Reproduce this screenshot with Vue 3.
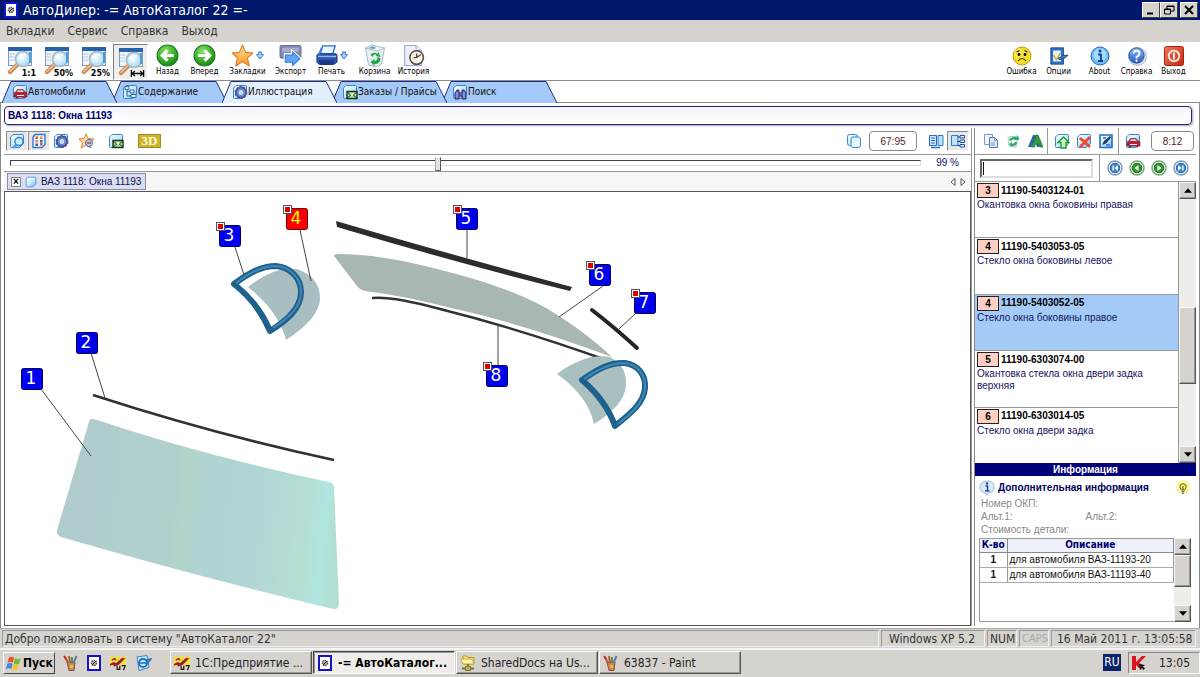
<script setup>
import { ref } from 'vue'

const menu = ['Вкладки', 'Сервис', 'Справка', 'Выход']

const zoomTools = [
  { label: '1:1', title: 'Масштаб 1:1' },
  { label: '50%', title: 'Масштаб 50%' },
  { label: '25%', title: 'Масштаб 25%' },
]
const mainTools = [
  { icon: 'back', label: 'Назад', size: 'w37' },
  { icon: 'forward', label: 'Вперед', size: 'w37' },
  { icon: 'star', label: 'Закладки', size: 'w49', drop: true },
  { icon: 'export', label: 'Экспорт', size: 'w37' },
  { icon: 'printer', label: 'Печать', size: 'w45', drop: true },
  { icon: 'bin', label: 'Корзина', size: 'w41' },
  { icon: 'history', label: 'История', size: 'w37' },
]
const sideTools = [
  { icon: 'sad', label: 'Ошибка' },
  { icon: 'options', label: 'Опции' },
  { icon: 'about', label: 'About' },
  { icon: 'help', label: 'Справка' },
  { icon: 'exit', label: 'Выход' },
]

const tabs = [
  { icon: 's-car', label: 'Автомобили' },
  { icon: 's-tree', label: 'Содержание' },
  { icon: 's-gear', label: 'Иллюстрация' },
  { icon: 's-mail', label: 'Заказы / Прайсы' },
  { icon: 's-find', label: 'Поиск' },
]
const activeTab = ref(2)

const viewPosition = ref(470)
const query = ref('')
const counter = ref('67:95')
const partCounter = ref('8:12')

const parts = [
  { n: 3, code: '11190-5403124-01', name: 'Окантовка окна боковины правая' },
  { n: 4, code: '11190-5403053-05', name: 'Стекло окна боковины левое' },
  { n: 4, code: '11190-5403052-05', name: 'Стекло окна боковины правое' },
  { n: 5, code: '11190-6303074-00', name: 'Окантовка стекла окна двери задка верхняя' },
  { n: 6, code: '11190-6303014-05', name: 'Стекло окна двери задка' },
]
const selected = ref(2)

const uses = [
  { qty: 1, text: 'для автомобиля ВАЗ-11193-20' },
  { qty: 1, text: 'для автомобиля ВАЗ-11193-40' },
]

const callouts = [
  { n: 1, x: 21, y: 368, line: [41, 389, 91, 456] },
  { n: 2, x: 76, y: 332, line: [91, 353, 105, 398] },
  { n: 3, x: 219, y: 225, line: [235, 247, 244, 275], flag: true },
  { n: 4, x: 286, y: 208, line: [300, 230, 311, 281], flag: true, hot: true },
  { n: 5, x: 456, y: 208, line: [467, 230, 467, 258], flag: true },
  { n: 6, x: 589, y: 264, line: [603, 286, 559, 317], flag: true },
  { n: 7, x: 634, y: 292, line: [635, 314, 618, 330], flag: true },
  { n: 8, x: 486, y: 365, line: [498, 326, 498, 365], flag: true },
]

const tasks = [
  { icon: 'onec', label: '1C:Предприятие ...' },
  { icon: 'catalog', label: '-= АвтоКаталог...', active: true },
  { icon: 'netfolder', label: 'SharedDocs на Us...' },
  { icon: 'paint', label: '63837 - Paint' },
]
</script>

<template>
  <div class="desktop">
    <svg class="defs" aria-hidden="true">
      <defs>
        <linearGradient id="gPage" x1="0" y1="0" x2="1" y2="1">
          <stop offset="0" stop-color="#ffffff" /><stop offset="0.5" stop-color="#c9ecfb" /><stop offset="1" stop-color="#6fb4ef" />
        </linearGradient>
        <radialGradient id="gGreen" cx="0.4" cy="0.3" r="0.8">
          <stop offset="0" stop-color="#8be36a" /><stop offset="0.6" stop-color="#35a828" /><stop offset="1" stop-color="#147a14" />
        </radialGradient>
        <linearGradient id="gBlue" x1="0" y1="0" x2="0" y2="1">
          <stop offset="0" stop-color="#8cc0f5" /><stop offset="1" stop-color="#2059c4" />
        </linearGradient>
        <linearGradient id="gRed" x1="0" y1="0" x2="1" y2="1">
          <stop offset="0" stop-color="#f0795a" /><stop offset="1" stop-color="#c02a12" />
        </linearGradient>
        <linearGradient id="gStar" x1="0" y1="0" x2="0" y2="1">
          <stop offset="0" stop-color="#ffe08a" /><stop offset="1" stop-color="#f79a2c" />
        </linearGradient>
        <radialGradient id="gLens" cx="0.4" cy="0.4" r="0.7">
          <stop offset="0" stop-color="#ffffff" /><stop offset="1" stop-color="#9ad4f2" />
        </radialGradient>
        <linearGradient id="gWind" x1="57" y1="440" x2="340" y2="470" gradientUnits="userSpaceOnUse">
          <stop offset="0" stop-color="#b3cdcd" /><stop offset="0.14" stop-color="#b0cbce" /><stop offset="0.25" stop-color="#afd0cc" />
          <stop offset="0.42" stop-color="#afd0cc" /><stop offset="0.47" stop-color="#b1d5c9" /><stop offset="0.54" stop-color="#b0d3d3" />
          <stop offset="0.7" stop-color="#b0d5d5" /><stop offset="0.82" stop-color="#b4dad4" /><stop offset="0.9" stop-color="#b4dfd3" />
          <stop offset="0.97" stop-color="#b0e6e0" /><stop offset="1" stop-color="#b2dfd3" />
        </linearGradient>
      </defs>

      <symbol id="zoomwin" viewBox="0 0 28 30">
        <rect x="2.5" y="2.5" width="23" height="18" fill="#eef5fc" stroke="#7d9cc4" />
        <rect x="2" y="2" width="24" height="4" fill="#2763ad" />
        <path d="M3 9h6M3 12h5M3 15h5" stroke="#bccbdd" />
        <path d="M12 19 4 27" stroke="#c98a55" stroke-width="4.4" stroke-linecap="round" />
        <path d="M11.500 19 4 26.500" stroke="#f0c39a" stroke-width="1.500" stroke-linecap="round" />
        <circle cx="17" cy="14" r="7.500" fill="url(#gLens)" stroke="#a8b9c8" stroke-width="1.700" />
        <path d="M13 13a5 5 0 0 1 7-3" fill="none" stroke="#fff" stroke-width="1.500" />
        <path d="M24 7v11" stroke="#4d9ad6" stroke-width="2" />
      </symbol>
      <symbol id="back" viewBox="0 0 22 22">
        <circle cx="11" cy="11" r="10" fill="url(#gGreen)" stroke="#1b7c1b" />
        <path d="M17 11H6m5-5-5 5 5 5" fill="none" stroke="#fff" stroke-width="3" />
      </symbol>
      <symbol id="forward" viewBox="0 0 22 22">
        <circle cx="11" cy="11" r="10" fill="url(#gGreen)" stroke="#1b7c1b" />
        <path d="M5 11h11m-5-5 5 5-5 5" fill="none" stroke="#fff" stroke-width="3" />
      </symbol>
      <symbol id="star" viewBox="0 0 22 22">
        <path d="m11 1 3 7 7 .6-5.300 4.700L17.500 21 11 16.700 4.500 21l1.700-7.700L1 8.600 8 8z" fill="url(#gStar)" stroke="#e07a22" stroke-linejoin="round" />
      </symbol>
      <symbol id="down" viewBox="0 0 9 10">
        <path d="M3 1h3v3h2.500l-4 5-4-5H3z" fill="#a9d2fa" stroke="#2b6fc4" />
      </symbol>
      <symbol id="export" viewBox="0 0 22 22">
        <rect x="1" y="1.500" width="20" height="12" rx="1.500" fill="#8289b4" stroke="#666e9e" />
        <path d="M3 3.500h16v4H3z" fill="#a5accf" />
        <path d="M5 19V9h7V5.500l9.500 8.500-9.500 8V19z" fill="#fff" stroke="#fff" />
        <path d="M6 17.500v-7h7V7.500l7 6.500-7 6.500v-3z" fill="#5ea5f4" stroke="#357bd8" />
      </symbol>
      <symbol id="printer" viewBox="0 0 24 24">
        <path d="M5 12 8 2h13l-3 10z" fill="#eaf6ff" stroke="#2a6bd0" stroke-width="1.400" />
        <path d="M2 12q0-2 3-2h15q3 0 3 2v7l-3 2H4l-2-2z" fill="#2c54ac" stroke="#173884" />
        <path d="M3 13h19" stroke="#92b7f1" stroke-width="1.500" />
        <path d="M4 17h16l-1 5H5z" fill="#1b3786" /><path d="M3 11 6 4h2l-3 7z" fill="#3c7ce0" />
      </symbol>
      <symbol id="bin" viewBox="0 0 22 23">
        <path d="m2 4 3 17 9 2 4-3 3-16-7 2z" fill="#e4f0f4" stroke="#a4bccb" />
        <path d="m2 4 6-3 13 3-7 3z" fill="#f5fafc" stroke="#a4bccb" />
        <path d="m5 4 4-2 4 2-3 1z" fill="#69a3c8" />
        <path d="M7 11q3-4 7-1l1-2 2 5-5-1 1-1q-3-2-4 2zM17 14q0 6-6 6v2l-4-4 4-3v2q3 0 3-4z" fill="#27a343" />
      </symbol>
      <symbol id="history" viewBox="0 0 22 22">
        <path d="M2.500 1.500h11l5 4.500v14.500h-16z" fill="#eef1fa" stroke="#9aa7cf" />
        <path d="M13.500 1.500V6h5" fill="#fff" stroke="#9aa7cf" />
        <circle cx="14" cy="13" r="6.500" fill="#f8f4ea" stroke="#59534e" stroke-width="1.500" />
        <path d="M14 13V9m0 4h-3m3 0 4-3" stroke="#584436" stroke-width="1.200" />
      </symbol>
      <symbol id="sad" viewBox="0 0 20 20">
        <circle cx="10" cy="10" r="9" fill="#f5df26" stroke="#b79a14" />
        <circle cx="7" cy="7" r="4.500" fill="#fff06a" opacity=".6" />
        <path d="m4.500 6 3-1.500M15.500 6l-3-1.500M6 15q4-5 8 0" fill="none" stroke="#332a08" stroke-width="1.200" />
        <circle cx="7" cy="8.500" r="1.400" /><circle cx="13" cy="8.500" r="1.400" />
      </symbol>
      <symbol id="options" viewBox="0 0 22 22">
        <path d="M2 2h14v18H2z" fill="#2c6fc6" stroke="#18498f" />
        <path d="M4.500 5H13v12H4.500z" fill="#e8f6ff" /><path d="m5 10 3 5 5-8" fill="none" stroke="#d3b33c" stroke-width="1.800" />
        <path d="m10 13.500 6-3 5-.5-3 3-7 2z" fill="#4c7fc4" stroke="#1e477f" />
      </symbol>
      <symbol id="about" viewBox="0 0 20 20">
        <circle cx="10" cy="10" r="9" fill="#6db9f0" stroke="#2371c9" /><circle cx="10" cy="9" r="6.500" fill="#a4dafa" />
        <circle cx="10" cy="5" r="1.500" fill="#0f3f9a" /><path d="M8 8.500h3V15M8 15h5" fill="none" stroke="#0f3f9a" stroke-width="1.800" />
      </symbol>
      <symbol id="help" viewBox="0 0 21 21">
        <circle cx="11" cy="11" r="9.500" fill="#d5e0ee" stroke="#a9bad0" /><circle cx="10" cy="10" r="8" fill="url(#gBlue)" stroke="#274f9e" />
        <path d="M7 8q0-3 3-3t3 2.500-3 4v1.500" fill="none" stroke="#fff" stroke-width="2" /><circle cx="10" cy="15.500" r="1.200" fill="#fff" />
      </symbol>
      <symbol id="exit" viewBox="0 0 20 20">
        <rect x=".5" y=".5" width="19" height="19" rx="2" fill="url(#gRed)" stroke="#a52210" />
        <circle cx="10" cy="10" r="5.300" fill="none" stroke="#ffe9e2" stroke-width="1.800" /><path d="M10 6.500v7" stroke="#ffe9e2" stroke-width="2" />
      </symbol>

      <symbol id="page" viewBox="0 0 16 16">
        <path d="M4 1.500h9.500q1 0 1 1v8l-4 4h-8q-1 0-1-1V4z" fill="url(#gPage)" stroke="#3b86d2" />
      </symbol>
      <symbol id="s-car" viewBox="0 0 16 16">
        <use href="#page" /><path d="M2 10q0-2 2-2l1.500-2.500h5.500L13 8q2 0 2 2v3h-2v1h-2v-1H6v1H4v-1H2z" fill="#b32436" stroke="#6d1424" stroke-width=".6" />
        <path d="m5 8 1-1.700h4.500L12 8z" fill="#efd7de" /><path d="M5 11.500h7" stroke="#f7e8ea" />
      </symbol>
      <symbol id="s-tree" viewBox="0 0 16 16">
        <use href="#page" /><path d="M5 4v8h4M5 7.500h3" fill="none" stroke="#2b64ad" /><path d="M3 2.500h4v3H3zM8 6h4v3H8zM9 10.500h5v3H9z" fill="#d7ecff" stroke="#2b64ad" stroke-width=".9" />
      </symbol>
      <symbol id="s-gear" viewBox="0 0 16 16">
        <use href="#page" /><circle cx="9" cy="8.500" r="4.300" fill="none" stroke="#4a5aa0" stroke-width="3.400" /><circle cx="9" cy="8.500" r="5.800" fill="none" stroke="#4a5aa0" stroke-dasharray="2.200 1.400" stroke-width="1.400" /><circle cx="9" cy="8.500" r="3.600" fill="none" stroke="#8c9ad0" />
      </symbol>
      <symbol id="s-mail" viewBox="0 0 16 16">
        <use href="#page" /><path d="M5 7.500h10v7H5z" fill="#b8e0a4" stroke="#0e3a1a" stroke-width="1.400" /><path d="m5 8 5 4 5-4M5 14l4-3m6 3-4-3" fill="none" stroke="#0e3a1a" /><circle cx="10" cy="10.500" r="1.500" fill="#e9f7c4" />
      </symbol>
      <symbol id="s-find" viewBox="0 0 16 16">
        <use href="#page" /><path d="M3 15V9l2-3h2v3h3V6h2l2 3v6h-4v-3H7v3z" fill="#5961ae" stroke="#2e357d" /><path d="M5 8v6m7-6v6" stroke="#b7bdf0" />
      </symbol>
      <symbol id="s-zoom" viewBox="0 0 16 16">
        <use href="#page" /><path d="m8 11-4 4" stroke="#5a9bd8" stroke-width="2.400" /><circle cx="10" cy="8.500" r="4" fill="#c9f0ff" stroke="#3487cc" stroke-width="1.400" />
      </symbol>
      <symbol id="s-grid" viewBox="0 0 16 16">
        <path d="M4 1.500h10v10l-3 3H2V4z" fill="#e7f3ff" stroke="#2f7bd0" stroke-width="1.400" />
        <path d="M4.500 3.500h2.500v2.500H4.500zM9 10h2.500v2.500H9z" fill="#e34a2c" /><path d="M4.500 7h2.500v2.500H4.500zM9 3.500h2.500v2.500H9z" fill="#e8903a" /><path d="M4.500 10.500h2.500v2.500H4.500zM9 7h2.500v2.500H9z" fill="#3a62b8" />
      </symbol>
      <symbol id="s-star" viewBox="0 0 16 16">
        <path d="m7 1 2 4.500 6 .5-4.500 4 1.500 5-5-3-5 3 1.500-5L0 6l5-.5z" fill="#fbd9a4" stroke="#e88132" /><circle cx="10" cy="10" r="3.500" fill="#b5cfee" stroke="#4a6dae" /><path d="M8 10h4" stroke="#c63d3d" stroke-width="1.500" />
      </symbol>
      <symbol id="s-copy" viewBox="0 0 16 16">
        <path d="M1.500 1.500h8v10h-8z" fill="#f1f8ff" stroke="#7798cb" /><path d="M6.500 4.500h5l3 3v7h-8z" fill="#dceaff" stroke="#5779b8" /><path d="M11.500 4.500v3h3M8 10h4M8 12h4" fill="none" stroke="#7798cb" />
      </symbol>
      <symbol id="s-pages" viewBox="0 0 16 16">
        <rect x="1.500" y="1.500" width="10" height="11" rx="2" fill="url(#gPage)" stroke="#3b86d2" /><rect x="5" y="4" width="9.500" height="10.500" rx="2" fill="#e5f7ff" stroke="#3b86d2" />
      </symbol>
      <symbol id="s-listleft" viewBox="0 0 16 16">
        <path d="M1.500 2.500h7v10h-7z" fill="#cbe6ff" stroke="#2c6bc0" /><path d="M3 5h4M3 7.500h4M3 10h4" stroke="#2c6bc0" /><path d="M10 2.500h5v10h-5z" fill="#bfe3ff" stroke="#2c7ad0" /><path d="M3 14.500h9" stroke="#2c6bc0" stroke-width="1.500" />
      </symbol>
      <symbol id="s-listright" viewBox="0 0 16 16">
        <path d="M1.500 2.500H8v10H1.500z" fill="#bfe3ff" stroke="#2c7ad0" /><path d="M10 2.500h4.500v2.500h-4.500zm0 4.500h4.500v2.500h-4.500zm0 4.500h4.500v2.500h-4.500z" fill="#dcefff" stroke="#23509a" /><path d="M7 4h3M7 8.500h3M7 12.500h3" stroke="#23509a" />
      </symbol>
      <symbol id="s-recycle" viewBox="0 0 16 16">
        <path d="m3 4 10-1-2 11-7-1z" fill="#eaf5ee" stroke="#b1cdbd" /><path d="M4 7q3-4 8-3l1-2 1 5-5 0 1-1q-3 0-4 2zM12 9q0 4-5 4l0 1.500L4 11l3-2v2q2 0 3-2z" fill="#27a86c" />
      </symbol>
      <symbol id="s-fonts" viewBox="0 0 16 16">
        <path d="M1 14 6 2h2.500L13 14h-3l-1-3H5l-1 3z" fill="#2d62b3" /><path d="M4 14 9 2h2l5 12h-3l-1-3H8.500l-1 3z" fill="#2c9a44" stroke="#17642c" stroke-width=".6" />
      </symbol>
      <symbol id="s-up" viewBox="0 0 16 16">
        <use href="#page" /><path d="m9.500 4 5.500 5.500h-3V15H7V9.500H4z" fill="#d0f2c4" stroke="#219a34" stroke-width="1.400" />
      </symbol>
      <symbol id="s-del" viewBox="0 0 16 16">
        <use href="#page" /><path d="m4 5 10 9M14 4 4 14" stroke="#ee4a30" stroke-width="3" />
      </symbol>
      <symbol id="s-edit" viewBox="0 0 16 16">
        <path d="M2 2h12v12.500H2z" fill="url(#gPage)" stroke="#1e6dc8" stroke-width="1.600" /><path d="m4 12 2-4 6-5 1 1.500-5 6z" fill="#22375e" /><path d="M5 5h3M8 12h4" stroke="#2a70c4" stroke-width="1.300" />
      </symbol>
      <symbol id="ring-blue" viewBox="0 0 16 16">
        <circle cx="8" cy="8" r="7" fill="#fff" stroke="#7f9dbc" stroke-width="1.500" /><circle cx="8" cy="8" r="4.800" fill="#3a86d3" stroke="#1d5daa" />
      </symbol>
      <symbol id="ring-green" viewBox="0 0 16 16">
        <circle cx="8" cy="8" r="7" fill="#fff" stroke="#7ca57c" stroke-width="1.500" /><circle cx="8" cy="8" r="4.800" fill="#2c9a2c" stroke="#17681a" />
      </symbol>
      <symbol id="nav-first" viewBox="0 0 16 16"><use href="#ring-blue" /><path d="M11 5v6L7.500 8zM5.500 5.500h1.500v5H5.500z" fill="#fff" /></symbol>
      <symbol id="nav-prev" viewBox="0 0 16 16"><use href="#ring-green" /><path d="M9.500 5v6L5.500 8z" fill="#fff" /></symbol>
      <symbol id="nav-next" viewBox="0 0 16 16"><use href="#ring-green" /><path d="M6.500 5v6l4-3z" fill="#fff" /></symbol>
      <symbol id="nav-last" viewBox="0 0 16 16"><use href="#ring-blue" /><path d="M5 5v6l3.500-3zM9 5.500h1.500v5H9z" fill="#fff" /></symbol>

      <symbol id="catalog" viewBox="0 0 16 16">
        <rect x="1" width="14" height="16" fill="#1414c8" /><rect x="3" y="2" width="10" height="12" fill="#fff" /><circle cx="8" cy="8" r="2.600" fill="#aaa" stroke="#555" stroke-dasharray="1.500 .8" stroke-width="1.400" /><path d="m6 10 4-4" stroke="#222" />
      </symbol>
      <symbol id="flag" viewBox="0 0 18 16">
        <path d="M4 2.500q3-2 5.500 0L8.300 8Q5.500 6 2.700 8z" fill="#e8562a" /><path d="M10.500 3q3 1.700 6 0L15 8.700q-3 1.600-5.800 0z" fill="#6dba3c" /><path d="M2.300 9Q5 7 8 9l-1.300 5.500Q4 12.500 1 14.500z" fill="#4a84e0" /><path d="M8.900 9.700q3 1.600 5.800 0l-1.400 5.600q-3 1.500-5.800 0z" fill="#f3c52f" />
      </symbol>
      <symbol id="paint" viewBox="0 0 16 16">
        <path d="M4 7h8l-1 8.500H6z" fill="#c9825c" stroke="#84513a" /><path d="M5 8 2 2M7 8 6 1" stroke="#b35b38" stroke-width="2" /><path d="M9 8V2" stroke="#3c9a3c" stroke-width="1.800" /><path d="m10.500 8 3-7" stroke="#6e73ae" stroke-width="2" /><path d="M1 1l2 3" stroke="#d02c2c" stroke-width="2" /><path d="M7 10h3v3H7z" fill="#e4c33a" />
      </symbol>
      <symbol id="onec" viewBox="0 0 20 16">
        <path d="M1 1h18v10H1z" fill="#f3e33c" /><path d="m1 9 4-2 3 1 7-6 3 1-7 7-5 2-2-2-3 1z" fill="#9c1d32" /><path d="m3 5 3-2 2 2" fill="none" stroke="#9c1d32" stroke-width="1.500" /><path d="M9 11v4h3v-4M14 11h4l-2 5" fill="none" stroke="#111" stroke-width="1.300" />
      </symbol>
      <symbol id="outlook" viewBox="0 0 18 16">
        <path d="m3 2 10-1.500 2 12-10 3z" fill="#bfe6fb" stroke="#3d87c5" /><circle cx="9" cy="8" r="4" fill="none" stroke="#1e70be" stroke-width="1.800" /><path d="M6 8h6M12 5l5-1-4 5" fill="none" stroke="#1e70be" stroke-width="1.400" />
      </symbol>
      <symbol id="netfolder" viewBox="0 0 16 16">
        <path d="M3 1h4l1 1.500h6V9H3z" fill="#f8e66a" stroke="#b5962a" /><path d="M1 4h11l2 5H3z" fill="#fff3a0" stroke="#b5962a" stroke-width=".7" /><path d="M8 9v4M2 13.500h12" stroke="#75723c" stroke-width="2" /><path d="M5.500 11.500h5v4h-5z" fill="#c9b54a" stroke="#75723c" />
      </symbol>
      <symbol id="kav" viewBox="0 0 16 16">
        <path d="M1 1h4v6l6-6h4L8 8l4 2-2 5-5-5v5H1z" fill="#d8141c" /><path d="m8 9 6 1-2 1.500 2 2-1.500 1.500-2-2L9 15z" fill="#1a1a1a" />
      </symbol>
      <symbol id="bulb" viewBox="0 0 18 18">
        <circle cx="9" cy="8" r="8" fill="#f9f78a" opacity=".75" /><path d="M7 11Q4.500 8 6 5.500q3-3 6 0Q13.500 8 11 11z" fill="#fff45a" stroke="#4d4b12" /><path d="M7.500 13h3M8 15h2M9 7v4" stroke="#333" />
      </symbol>
      <symbol id="info" viewBox="0 0 16 16">
        <path d="M8 1q7 0 7 6t-6 6l-1 2-2-2Q1 12 1 7t7-6z" fill="#d8ecfb" stroke="#9bbcd8" /><circle cx="8" cy="3.500" r="1.300" fill="#1c4fa5" /><path d="M6.500 6h2v5M6 11h4.500" fill="none" stroke="#1c4fa5" stroke-width="1.600" />
      </symbol>
      <symbol id="tri-up" viewBox="0 0 9 5"><path d="m0 5 4.500-5L9 5z" /></symbol>
      <symbol id="tri-down" viewBox="0 0 9 5"><path d="m0 0 4.500 5L9 0z" /></symbol>
    </svg>

    <header class="titlebar">
      <svg class="i16"><use href="#catalog" /></svg>
      <h1>АвтоДилер: -= АвтоКаталог 22 =-</h1>
      <div class="winbtns">
        <button aria-label="Свернуть"><svg viewBox="0 0 12 10"><path d="M2 8.500h6" stroke="#000" stroke-width="2" /></svg></button>
        <button aria-label="Восстановить"><svg viewBox="0 0 12 10"><path d="M4 4V1h7v5H8M4 1.500h7M1.500 4h6v5h-6zM1 4.500h7" fill="none" stroke="#000" /></svg></button>
        <button class="gap" aria-label="Закрыть"><svg viewBox="0 0 12 10"><path d="m2 1 8 8m0-8-8 8" stroke="#000" stroke-width="2" /></svg></button>
      </div>
    </header>

    <nav class="menubar">
      <button v-for="m in menu" :key="m">{{ m }}</button>
    </nav>

    <div class="toolbar">
      <button v-for="z in zoomTools" :key="z.label" class="tool zoomtool w37" :title="z.title">
        <svg class="zi"><use href="#zoomwin" /></svg><b>{{ z.label }}</b>
      </button>
      <button class="tool zoomtool w37 pressed" title="По ширине">
        <svg class="zi"><use href="#zoomwin" /></svg>
        <svg class="fit" viewBox="0 0 16 8"><path d="M1 0v8M15 0v8M2 4h12M5 1 2 4l3 3M11 1l3 3-3 3" fill="none" stroke="#000" stroke-width="1.500" /></svg>
      </button>
      <button v-for="t in mainTools" :key="t.icon" class="tool" :class="t.size">
        <span class="pic"><svg class="i24"><use :href="'#' + t.icon" /></svg><svg v-if="t.drop" class="drop"><use href="#down" /></svg></span>
        <span>{{ t.label }}</span>
      </button>
      <span class="grow"></span>
      <button v-for="t in sideTools" :key="t.icon" class="tool w37 side">
        <span class="pic"><svg class="i22"><use :href="'#' + t.icon" /></svg></span>
        <span>{{ t.label }}</span>
      </button>
    </div>

    <nav class="tabs">
      <button v-for="(t, i) in tabs" :key="t.label" class="tab" :class="{ active: i === activeTab }" :style="{ zIndex: i === activeTab ? 9 : 5 - i }" @click="activeTab = i">
        <svg class="shape" viewBox="0 0 116 22" preserveAspectRatio="none"><path d="M0 22 9 .5H105L116 22" /></svg>
        <svg class="i16"><use :href="'#' + t.icon" /></svg><span>{{ t.label }}</span>
      </button>
    </nav>

    <main class="page">
      <h2 class="crumb">ВАЗ 1118: Окна 11193</h2>
      <div class="columns">
        <section class="left">
          <div class="bar viewbar">
            <button class="ib on" aria-label="Лупа"><svg class="i16"><use href="#s-zoom" /></svg></button>
            <button class="ib on" aria-label="Сетка"><svg class="i16"><use href="#s-grid" /></svg></button>
            <button class="ib" aria-label="Иллюстрация"><svg class="i16"><use href="#s-gear" /></svg></button>
            <button class="ib wide" aria-label="В закладки"><svg class="i16"><use href="#s-star" /></svg></button>
            <button class="ib wide" aria-label="Отправить"><svg class="i16"><use href="#s-mail" /></svg></button>
            <button class="threed">3D</button>
            <span class="grow"></span>
            <button class="ib" aria-label="Копировать"><svg class="i16"><use href="#s-pages" /></svg></button>
            <input v-model="counter" class="count" aria-label="Позиция" />
            <button class="ib" aria-label="Список слева"><svg class="i16"><use href="#s-listleft" /></svg></button>
            <button class="ib on" aria-label="Список справа"><svg class="i16"><use href="#s-listright" /></svg></button>
          </div>
          <div class="sliderrow">
            <input v-model="viewPosition" type="range" min="0" max="1000" aria-label="Масштаб" />
            <output>99 %</output>
          </div>
          <div class="docs">
            <div class="doc">
              <button aria-label="Закрыть вкладку">×</button>
              <svg class="i12"><use href="#page" /></svg>
              <span>ВАЗ 1118: Окна 11193</span>
            </div>
            <span class="grow"></span>
            <button class="arrow" aria-label="Назад"><svg viewBox="0 0 6 8"><path d="M5 .5v7L1 4z" /></svg></button>
            <button class="arrow" aria-label="Вперед"><svg viewBox="0 0 6 8"><path d="M1 .5v7L5 4z" /></svg></button>
          </div>
          <div class="canvas">
            <svg class="drawing" role="img" aria-label="Схема остекления">
              <g transform="translate(-5 -192)">
                <path d="M94 419Q205 456 329 482q5 1 5 6l5 115q0 7-6 6Q195 576 61 537q-5-2-4-7L89 422q1-4 5-3z" fill="url(#gWind)" />
                <path d="M93 395Q213 434 334 460" fill="none" stroke="#35302d" stroke-width="2.500" />
                <path d="m336 221 1 6q120 36 233 64l2-4Q445 253 336 221z" fill="#2c2c2b" />
                <path d="M334 256q0-2 4-2 42 0 99 15 82 20 122 47 31 20 53 41-92-34-157-48-49-13-90-18-5-1-8-5z" fill="#a9b7b3" />
                <path d="M372 298q20-2 68 11 80 20 169 52" fill="none" stroke="#323232" stroke-width="2.500" />
                <path d="m592 310q22 17 45 38" fill="none" stroke="#252525" stroke-width="4" stroke-linecap="round" />
                <path d="M248 287q25-21 49-18 23 8 23 29 0 20-34 42-7-28-38-53z" fill="#a9bec0" />
                <path d="M234 284c16-12 28-18 42-18 14 1 25 12 25 26 0 16-13 28-31 39-8-19-22-36-36-47z" fill="none" stroke="#1e618d" stroke-width="6" stroke-linejoin="round" />
                <path d="M236 283c14-11 26-17 40-17 14 1 25 12 25 26 0 15-12 26-28 36" fill="none" stroke="#4288b3" stroke-width="2" />
                <path d="M557 374q28-21 53-17 17 9 16 28-1 20-32 39-6-28-37-50z" fill="#a9bfc0" />
                <path d="M582 380c16-11 28-18 43-17 13 2 21 12 20 25-1 15-15 26-30 38-6-17-19-34-33-46z" fill="none" stroke="#1e618d" stroke-width="6" stroke-linejoin="round" />
                <path d="M584 379c14-10 27-16 41-16 13 2 21 12 20 25-1 14-13 25-27 36" fill="none" stroke="#4288b3" stroke-width="2" />
                <g v-for="c in callouts" :key="c.n">
                  <line :x1="c.line[0]" :y1="c.line[1]" :x2="c.line[2]" :y2="c.line[3]" stroke="#444" />
                  <rect :x="c.x + 0.5" :y="c.y + 0.5" width="21" height="21" rx="2" :fill="c.hot ? '#fa0000' : '#0000f0'" :stroke="c.hot ? '#6a0000' : '#000058'" />
                  <text class="num" :x="c.x + 10" :y="c.y + 16" :fill="c.hot ? '#ffff00' : '#ffffff'">{{ c.n }}</text>
                  <g v-if="c.flag">
                    <rect :x="c.x - 2.5" :y="c.y - 2.5" width="8" height="8" fill="#fff" stroke="#555" />
                    <rect :x="c.x - 1" :y="c.y - 1" width="5" height="5" fill="#e00000" />
                  </g>
                </g>
              </g>
            </svg>
          </div>
        </section>

        <aside class="right">
          <div class="bar partbar">
            <button class="ib" aria-label="Копировать"><svg class="i16"><use href="#s-copy" /></svg></button>
            <button class="ib" aria-label="В корзину"><svg class="i16"><use href="#s-recycle" /></svg></button>
            <button class="ib" aria-label="Шрифт"><svg class="i16"><use href="#s-fonts" /></svg></button>
            <i class="sep"></i>
            <button class="ib" aria-label="Добавить"><svg class="i16"><use href="#s-up" /></svg></button>
            <button class="ib" aria-label="Удалить"><svg class="i16"><use href="#s-del" /></svg></button>
            <button class="ib" aria-label="Изменить"><svg class="i16"><use href="#s-edit" /></svg></button>
            <i class="sep"></i>
            <button class="ib" aria-label="Автомобиль"><svg class="i16"><use href="#s-car" /></svg></button>
            <span class="grow"></span>
            <input v-model="partCounter" class="count small" aria-label="Позиция в списке" />
          </div>
          <div class="searchrow">
            <input v-model="query" type="text" aria-label="Поиск детали" />
            <div class="navs">
              <button v-for="n in ['first', 'prev', 'next', 'last']" :key="n" class="ib" :aria-label="n"><svg class="i16"><use :href="'#nav-' + n" /></svg></button>
            </div>
          </div>
          <div class="listwrap">
            <ul class="parts">
              <li v-for="(p, i) in parts" :key="p.code" :class="{ sel: i === selected }" @click="selected = i">
                <div class="code"><span class="badge">{{ p.n }}</span><b>{{ p.code }}</b></div>
                <p>{{ p.name }}</p>
              </li>
            </ul>
            <div class="scroll">
              <button aria-label="Вверх"><svg><use href="#tri-up" /></svg></button>
              <span class="track upper"></span>
              <span class="thumb"></span>
              <span class="track lower"></span>
              <button aria-label="Вниз"><svg><use href="#tri-down" /></svg></button>
            </div>
          </div>
          <h3 class="infohead">Информация</h3>
          <div class="info">
            <div class="infotitle">
              <svg class="i16"><use href="#info" /></svg><b>Дополнительная информация</b>
              <span class="grow"></span><svg class="i16"><use href="#bulb" /></svg>
            </div>
            <div class="facts">
              <span>Номер ОКП:</span><span></span>
              <span>Альт.1:</span><span>Альт.2:</span>
              <span class="full">Стоимость детали:</span>
            </div>
            <div class="usewrap">
              <div class="tablebox">
                <table>
                  <thead><tr><th class="qty">К-во</th><th>Описание</th></tr></thead>
                  <tbody><tr v-for="u in uses" :key="u.text"><td class="qty">{{ u.qty }}</td><td>{{ u.text }}</td></tr></tbody>
                </table>
              </div>
              <div class="scroll">
                <button aria-label="Вверх"><svg><use href="#tri-up" /></svg></button>
                <span class="thumb"></span>
                <span class="track"></span>
                <button aria-label="Вниз"><svg><use href="#tri-down" /></svg></button>
              </div>
            </div>
          </div>
        </aside>
      </div>
    </main>

    <footer class="status">
      <span class="grow">Добро пожаловать в систему "АвтоКаталог 22"</span>
      <span class="os">Windows XP 5.2</span>
      <span class="key">NUM</span>
      <span class="key off">CAPS</span>
      <span class="date">16 Май 2011 г. 13:05:58</span>
    </footer>

    <div class="taskbar">
      <button class="start"><svg><use href="#flag" /></svg>Пуск</button>
      <div class="quick">
        <button aria-label="Paint"><svg class="i16"><use href="#paint" /></svg></button>
        <button aria-label="АвтоКаталог"><svg class="i16"><use href="#catalog" /></svg></button>
        <button aria-label="1C"><svg class="i18"><use href="#onec" /></svg></button>
        <button aria-label="Почта"><svg class="i18"><use href="#outlook" /></svg></button>
      </div>
      <button v-for="t in tasks" :key="t.label" class="task" :class="{ active: t.active }">
        <svg class="i18"><use :href="'#' + t.icon" /></svg><span>{{ t.label }}</span>
      </button>
      <span class="grow"></span>
      <span class="lang">RU</span>
      <div class="tray"><svg class="i16"><use href="#kav" /></svg><time>13:05</time></div>
    </div>
  </div>
</template>

<style>
html, body { margin: 0; height: 100%; background: #d4d0c8; }
</style>

<style scoped>
.desktop {
  --face: #d6d3ce;
  --ui: "DejaVu Sans Condensed", "DejaVu Sans", sans-serif;
  --sans: "Liberation Sans", Arial, sans-serif;
  display: flex; flex-direction: column; min-height: 100vh;
  background: var(--face); color: #111; font: 10px/12px var(--sans); overflow: hidden;
}
* { box-sizing: border-box; }
button { border: 0; padding: 0; margin: 0; background: none; font: inherit; color: inherit; cursor: default; }
h1, h2, h3, p, ul { margin: 0; padding: 0; font-size: inherit; font-weight: inherit; list-style: none; }
svg { display: block; flex: none; }
input { min-width: 0; margin: 0; outline: 0; font: inherit; }
.defs { position: absolute; width: 0; height: 0; }
.i12 { width: 12px; height: 12px; }
.i16 { width: 16px; height: 16px; }
.i18 { width: 18px; height: 16px; }
.i22 { width: 20px; height: 20px; }
.i24 { width: 23px; height: 23px; }
.grow { flex: 1; }

.titlebar { display: flex; align-items: center; gap: 4px; height: 20px; padding: 0 2px 0 3px; background: #00186b; color: #fff; font: 14px/20px var(--ui); }
.titlebar h1 { flex: 1; }
.winbtns { display: flex; }
.winbtns button { width: 18px; height: 16px; padding: 2px; background: var(--face); border: 1px solid; border-color: #fff #404040 #404040 #fff; }
.winbtns svg { width: 12px; height: 10px; }
.winbtns .gap { margin-left: 2px; }

.menubar { display: flex; gap: 13px; height: 22px; padding-left: 6px; font: 12px/22px var(--ui); color: #333; }

.toolbar { display: flex; height: 39px; padding: 2px 8px 1px 1px; background: #fff; border-bottom: 1px solid #8c8c8c; }
.tool { display: flex; flex-direction: column; align-items: center; height: 36px; font: 8px/10px var(--ui); color: #000; white-space: nowrap; position: relative; }
.w37 { width: 37px; } .w41 { width: 41px; } .w45 { width: 45px; } .w49 { width: 49px; }
.tool .pic { display: flex; align-items: center; gap: 2px; height: 23px; }
.drop { width: 8px; height: 9px; }
.zi { width: 28px; height: 30px; margin-top: 1px; }
.zoomtool b, .fit { position: absolute; right: 2px; bottom: 2px; }
.zoomtool b { font: bold 8px/8px "DejaVu Sans", sans-serif; }
.fit { width: 15px; height: 7px; }
.pressed { background: #efeeec; border: 1px solid; border-color: #808080 #fff #fff #808080; width: 35px; margin: 0 1px; }
.side:nth-last-child(3) { margin-left: 4px; }

.tabs { display: flex; height: 22px; background: #fff; padding-left: 2px; border-bottom: 1px solid #8c8c8c; }
.tab { position: relative; display: flex; align-items: center; width: 115px; height: 22px; padding-left: 10px; margin-right: -5px; font: 10px/20px var(--ui); color: #111; white-space: nowrap; }
.shape { position: absolute; inset: 0; width: 100%; height: 100%; }
.shape path { fill: #a6caf7; stroke: #1d2d83; vector-effect: non-scaling-stroke; }
.tab.active .shape path { fill: #e4effd; }
.tab .i16, .tab span { position: relative; }

.page { flex: 1; display: flex; flex-direction: column; padding: 3px 3px 2px; background: #fff; border-left: 1px solid #888; border-right: 1px solid #888; }
.crumb { height: 19px; margin-right: 4px; padding-left: 3px; border: 1px solid #25257c; border-radius: 4px; background: linear-gradient(#f4f4ff, #fff); box-shadow: 1px 1px 2px #a8a8b8; font: bold 10px/17px var(--sans); color: #000060; }
.columns { flex: 1; display: flex; gap: 2px; margin-top: 3px; }
.left { flex: 1; min-width: 0; display: flex; flex-direction: column; border-right: 1px solid #999; }
.right { width: 222px; display: flex; flex-direction: column; border-left: 1px solid #888; }
.bar { display: flex; align-items: center; height: 27px; border-bottom: 1px solid #999; }
.ib { display: grid; place-items: center; width: 22px; height: 20px; }
.ib.on { background: #e9e7e3; border: 1px solid; border-color: #888 #fff #fff #888; }
.viewbar { padding: 0 2px; }
.ib.wide { width: 28px; margin-left: 1px; }
.threed { width: 23px; height: 14px; margin-left: 8px; background: #cdb52d; border: 1px solid #a08a1c; font: bold 13px/12px "Liberation Serif", serif; color: #fffbd8; }
.count { width: 48px; height: 20px; margin: 0 8px 0 4px; border: 1px solid #888; border-radius: 4px; background: #fff; text-align: center; color: #5b1818; }
.count.small { width: 43px; margin: 0 2px 0 0; }

.sliderrow { display: flex; align-items: center; height: 17px; padding: 0 12px 0 6px; border-bottom: 1px solid #999; color: #101060; }
.sliderrow input { flex: 1; height: 14px; appearance: none; background: none; }
.sliderrow input::-webkit-slider-runnable-track { height: 6px; border: 1px solid; border-color: #404040 #ddd #ddd #404040; background: #fff; }
.sliderrow input::-webkit-slider-thumb { appearance: none; width: 6px; height: 14px; margin-top: -4px; background: #e4e2de; border: 1px solid; border-color: #eee #555 #555 #aaa; }
.sliderrow output { width: 38px; text-align: right; }

.docs { display: flex; align-items: center; height: 19px; background: #f6f6f6; }
.doc { display: flex; align-items: center; gap: 4px; height: 17px; margin-left: 3px; padding: 0 4px 0 3px; background: #d9def6; border: 1px solid #8c8c9c; color: #10103a; }
.doc button { width: 10px; height: 10px; background: #fff; border: 1px solid #888; font: bold 10px/8px var(--sans); color: #000; }
.arrow { width: 10px; }
.arrow:last-child { margin-right: 1px; }
.arrow svg { width: 6px; height: 8px; fill: #fff; stroke: #555; }
.canvas { flex: 1; display: flex; min-height: 400px; border: 1px solid #555; background: #fff; }
.drawing { flex: 1; width: 100%; min-width: 0; }
.num { font: 17px "DejaVu Sans", sans-serif; text-anchor: middle; }

.partbar { padding-left: 5px; }
.sep { width: 1px; height: 100%; margin: 0 3px 0 1px; background: #999; }
.searchrow { display: flex; align-items: center; height: 27px; padding-left: 5px; border-bottom: 1px solid #999; }
.searchrow input { flex: 1; height: 19px; border: 2px solid; border-color: #666 #ddd #ddd #666; padding: 0 2px; }
.searchrow input:placeholder-shown, .searchrow input { background: linear-gradient(#111, #111) 1px 50% / 1px 13px no-repeat #fff; }
.navs { display: flex; align-items: center; height: 100%; margin-left: 6px; padding: 0 4px; border-left: 1px solid #999; }
.listwrap { display: flex; height: 281px; }
.parts { flex: 1; display: flex; flex-direction: column; border-right: 1px solid #999; overflow: hidden; }
.parts li { flex: 1; padding: 1px 1px 0 2px; border-bottom: 1px solid #999; }
.parts li:last-child { border-bottom: 0; }
.parts li.sel { background: #a4cbf7; }
.code { display: flex; align-items: center; gap: 2px; height: 15px; font: bold 10px/14px var(--sans); color: #000; }
.badge { width: 22px; height: 15px; background: #ffcfc4; border: 1px solid #222; text-align: center; line-height: 13px; }
.parts p { font: 10px/12px var(--sans); color: #14145c; margin-top: 1px; }

.scroll { display: flex; flex-direction: column; width: 17px; background: #efedea; }
.scroll button, .thumb { flex: none; background: var(--face); border: 1px solid; border-color: #f8f8f8 #555 #555 #f8f8f8; box-shadow: inset -1px -1px #999; }
.scroll button { display: grid; place-items: center; height: 17px; }
.scroll svg { width: 8px; height: 5px; }
.track { flex: 1; }
.listwrap .upper { flex: 108; }
.listwrap .lower { flex: 62; }
.listwrap .thumb { height: 77px; }

.infohead { height: 13px; background: #000078; color: #fff; font: bold 10px/13px var(--sans); text-align: center; }
.info { flex: 1; display: flex; flex-direction: column; padding: 3px 5px 4px 4px; }
.infotitle { display: flex; align-items: center; gap: 3px; height: 17px; font: bold 10px/16px var(--sans); color: #00005a; }
.facts { display: grid; grid-template-columns: 1fr 1fr; padding: 1px 1px 2px 2px; font: 10px/13px var(--sans); color: #888; }
.full { grid-column: 1 / -1; }
.usewrap { flex: 1; display: flex; }
.tablebox { flex: 1; border: 1px solid #999; border-right: 0; }
table { width: 100%; border-collapse: collapse; font: 10px/14px var(--sans); color: #111; }
th { height: 13px; padding: 0; border-right: 1px solid #888; border-bottom: 1px solid #888; background: #eef0fb; font: bold 10px/12px var(--ui); color: #000070; }
td { padding: 0 2px; border-right: 1px solid #999; border-bottom: 1px solid #aaa; }
.qty { width: 27px; text-align: center; }
td.qty { font-weight: bold; }
.usewrap .thumb { height: 32px; }

.status { display: flex; align-items: center; gap: 2px; height: 20px; padding: 1px 4px 1px 2px; font: 12px/16px var(--ui); color: #333; white-space: nowrap; border-top: 1px solid #aaa; }
.status span { height: 17px; padding: 0 2px; border: 1px solid; border-color: #999 #f0f0f0 #f0f0f0 #999; }
.status .os { width: 104px; padding-left: 7px; }
.status .key { width: 30px; }
.status .off { color: #aaa; font-size: 11px; }
.status .date { width: 145px; padding-left: 5px; }

.taskbar { display: flex; align-items: center; height: 29px; padding: 0 0 2px 3px; border-top: 2px solid #f4f4f4; font: 12px/18px var(--ui); color: #222; white-space: nowrap; }
.start { display: flex; align-items: center; gap: 1px; width: 52px; height: 22px; padding-left: 1px; font-weight: bold; font-size: 12px; color: #000; border: 1px solid; border-color: #fff #444 #444 #fff; }
.start svg { width: 17px; height: 16px; }
.quick { display: flex; gap: 7px; margin: 0 18px 0 8px; }
.task { display: flex; align-items: center; gap: 4px; width: 142px; height: 23px; margin-right: 1px; padding: 0 2px; background: var(--face); border: 1px solid; border-color: #fff #555 #555 #fff; box-shadow: inset -1px -1px #999; overflow: hidden; }
.task.active { background: #efedea; border-color: #444 #fff #fff #444; box-shadow: inset 1px 1px #999; font-weight: bold; color: #000; }
.lang { width: 18px; height: 17px; background: #0a246a; color: #fff; text-align: center; line-height: 17px; }
.tray { display: flex; align-items: center; gap: 12px; width: 72px; height: 22px; margin-left: 7px; padding-left: 2px; border: 1px solid; border-color: #888 #fff #fff #888; }
</style>
